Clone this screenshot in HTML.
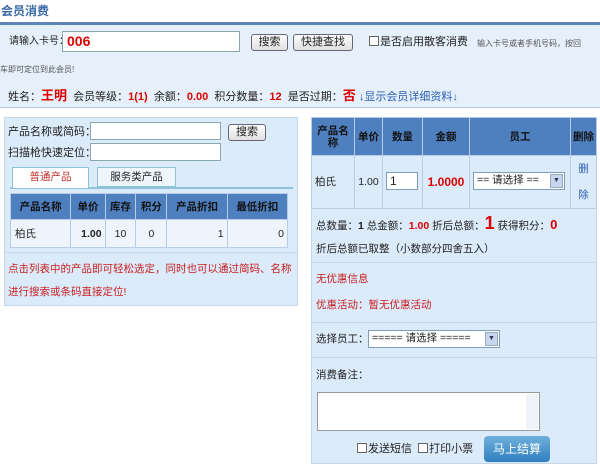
<!DOCTYPE html><html><head><meta charset="utf-8"><style>
*{margin:0;padding:0;box-sizing:border-box}
body{width:600px;height:464px;background:#fff;font-family:"Liberation Sans","Noto Sans CJK SC",sans-serif;font-size:10.5px;line-height:12px;color:#222;position:relative;overflow:hidden}
.a{position:absolute;white-space:nowrap}
.r{color:#d00;font-weight:bold}
.inp{position:absolute;background:#fff;border:1px solid #8aa;}
.btn{position:absolute;border:1px solid #667;border-radius:3px;background:linear-gradient(#fdfdfd,#e0e0e0);text-align:center;font-size:11px;line-height:15px}
.cb{display:inline-block;width:10px;height:10px;border:1px solid #666;background:#fff;vertical-align:-1px;margin-right:1px}
table{border-collapse:collapse;position:absolute}
td,th{border:1px solid #b8cde4;font-size:10.5px;line-height:12px}
th{background:#4e7fbf;color:#111}
.sel{position:absolute;background:#fff;border:1px solid #7f9db9;font-size:10.5px;line-height:15px;padding-left:3px}
.sel i{position:absolute;right:1px;top:1px;width:13px;height:14px;background:#c6d6f0;border:1px solid #9ab;font-style:normal;font-size:7px;text-align:center;line-height:12px;color:#335}
</style></head><body>
<div class="a" style="left:1px;top:4px;font-size:12px;line-height:14px;font-weight:bold;color:#3a6aa8">会员消费</div>
<div class="a" style="left:0;top:22px;width:600px;height:3px;background:#5e84b5"></div>
<div class="a" style="left:0;top:25px;width:600px;height:83px;background:#e6f0fa;border-bottom:1px solid #b5c9e0"></div>
<div class="a" style="left:9px;top:36px;font-size:10px">请输入卡号：</div>
<div class="inp" style="left:62px;top:31px;width:178px;height:21px;color:#d00;font-weight:bold;font-size:14px;padding-left:4px;line-height:19px">006</div>
<div class="btn" style="left:251px;top:34px;width:37px;height:17px">搜索</div>
<div class="btn" style="left:293px;top:34px;width:60px;height:17px">快捷查找</div>
<div class="a" style="left:369px;top:36px;font-size:11px"><span class="cb"></span>是否启用散客消费</div>
<div class="a" style="left:477px;top:38px;font-size:8px;color:#555">输入卡号或者手机号码，按回</div>
<div class="a" style="left:0;top:64px;font-size:8px;color:#555">车即可定位到此会员!</div>
<div class="a" style="left:8px;top:89px;line-height:14px;font-size:11px">姓名：<span class="r" style="font-size:13px">王明</span>&nbsp; 会员等级：<span class="r">1(1)</span>&nbsp; 余额：<span class="r">0.00</span>&nbsp; 积分数量：<span class="r">12</span>&nbsp; 是否过期：<span class="r" style="font-size:13px">否</span> <span style="color:#2a5db0">↓显示会员详细资料↓</span></div>

<div class="a" style="left:4px;top:117px;width:294px;height:189px;background:#dcebfa;border:1px solid #c5d6e8"></div>
<div class="a" style="left:8px;top:126px;font-size:11px">产品名称或简码：</div>
<div class="inp" style="left:90px;top:122px;width:131px;height:18px"></div>
<div class="btn" style="left:228px;top:124px;width:38px;height:17px">搜索</div>
<div class="a" style="left:8px;top:147px;font-size:11px">扫描枪快速定位：</div>
<div class="inp" style="left:90px;top:143px;width:131px;height:18px"></div>
<div class="a" style="left:10px;top:187px;width:283px;height:2px;background:#8fc3d8"></div>
<div class="a" style="left:12px;top:167px;width:77px;height:21px;background:#fff;border:1px solid #8fc3d8;border-bottom:none;color:#c03030;text-align:center;line-height:19px">普通产品</div>
<div class="a" style="left:97px;top:167px;width:79px;height:20px;background:#eef6fc;border:1px solid #8fc3d8;text-align:center;line-height:19px">服务类产品</div>
<table style="left:10px;top:193px;width:278px;background:#eef4fb">
<tr style="height:26px"><th>产品名称</th><th>单价</th><th>库存</th><th>积分</th><th>产品折扣</th><th>最低折扣</th></tr>
<tr style="height:28px"><td style="padding-left:4px">柏氏</td><td style="text-align:right;font-weight:bold;padding-right:3px">1.00</td><td style="text-align:center">10</td><td style="text-align:center">0</td><td style="text-align:right;padding-right:3px">1</td><td style="text-align:right;padding-right:3px">0</td></tr></table>
<div class="a" style="left:4px;top:252px;width:294px;height:54px;border-top:1px solid #c5d6e8"></div>
<div class="a" style="left:8px;top:263px;color:#c82020">点击列表中的产品即可轻松选定，同时也可以通过简码、名称</div>
<div class="a" style="left:8px;top:286px;color:#c82020">进行搜索或条码直接定位!</div>

<div class="a" style="left:311px;top:117px;width:286px;height:347px;background:#dcebfa;border:1px solid #c5d6e8"></div>
<table style="left:311px;top:117px;width:286px;background:#dcebfa">
<tr style="height:38px"><th style="width:43px">产品名<br>称</th><th style="width:28px">单价</th><th style="width:40px">数量</th><th style="width:47px">金额</th><th style="width:101px">员工</th><th>删除</th></tr>
<tr style="height:52px"><td style="padding-left:3px">柏氏</td><td style="text-align:center">1.00</td><td></td><td style="text-align:center;color:#d00;font-weight:bold;font-size:12px">1.0000</td><td></td><td style="text-align:center;color:#2a5db0;line-height:26px">删<br>除</td></tr></table>
<div class="inp" style="left:386px;top:172px;width:32px;height:18px;font-size:12px;padding-left:3px;line-height:16px;border-color:#7f9db9">1</div>
<div class="sel" style="left:473px;top:172px;width:92px;height:18px">== 请选择 ==<i>▼</i></div>
<div class="a" style="left:316px;top:216px;line-height:14px">总数量：<b>1</b> 总金额：<span class="r">1.00</span> 折后总额：<span class="r" style="font-size:18px;line-height:14px">1</span> 获得积分：<span class="r" style="font-size:13px">0</span></div>
<div class="a" style="left:316px;top:243px">折后总额已取整（小数部分四舍五入）</div>
<div class="a" style="left:312px;top:262px;width:284px;height:1px;background:#c5d6e8"></div>
<div class="a" style="left:316px;top:273px;color:#c82020">无优惠信息</div>
<div class="a" style="left:316px;top:299px;color:#c82020">优惠活动：暂无优惠活动</div>
<div class="a" style="left:312px;top:322px;width:284px;height:1px;background:#c5d6e8"></div>
<div class="a" style="left:316px;top:333px">选择员工：</div>
<div class="sel" style="left:368px;top:330px;width:132px;height:18px">===== 请选择 =====<i>▼</i></div>
<div class="a" style="left:312px;top:357px;width:284px;height:1px;background:#c5d6e8"></div>
<div class="a" style="left:316px;top:369px">消费备注：</div>
<div class="inp" style="left:317px;top:392px;width:223px;height:39px;border-color:#999"><div style="position:absolute;right:1px;top:1px;width:12px;height:35px;background:#f0f3f8"></div></div>
<div class="a" style="left:357px;top:443px;font-size:11px"><span class="cb"></span>发送短信 &nbsp;<span class="cb"></span>打印小票</div>
<div class="a" style="left:484px;top:436px;width:66px;height:26px;border-radius:4px;background:linear-gradient(#6fb0dc,#2f7fc0);color:#fff;text-align:center;line-height:26px;font-size:12px">马上结算</div>
</body></html>
